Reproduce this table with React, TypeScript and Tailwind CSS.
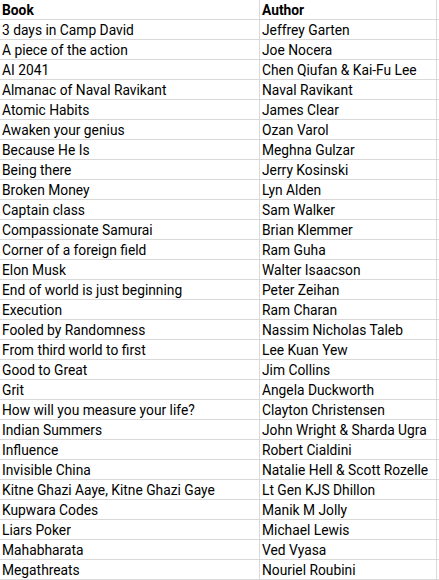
const rows: [string, string][] = [
  ["3 days in Camp David", "Jeffrey Garten"],
  ["A piece of the action", "Joe Nocera"],
  ["AI 2041", "Chen Qiufan & Kai-Fu Lee"],
  ["Almanac of Naval Ravikant", "Naval Ravikant"],
  ["Atomic Habits", "James Clear"],
  ["Awaken your genius", "Ozan Varol"],
  ["Because He Is", "Meghna Gulzar"],
  ["Being there", "Jerry Kosinski"],
  ["Broken Money", "Lyn Alden"],
  ["Captain class", "Sam Walker"],
  ["Compassionate Samurai", "Brian Klemmer"],
  ["Corner of a foreign field", "Ram Guha"],
  ["Elon Musk", "Walter Isaacson"],
  ["End of world is just beginning", "Peter Zeihan"],
  ["Execution", "Ram Charan"],
  ["Fooled by Randomness", "Nassim Nicholas Taleb"],
  ["From third world to first", "Lee Kuan Yew"],
  ["Good to Great", "Jim Collins"],
  ["Grit", "Angela Duckworth"],
  ["How will you measure your life?", "Clayton Christensen"],
  ["Indian Summers", "John Wright & Sharda Ugra"],
  ["Influence", "Robert Cialdini"],
  ["Invisible China", "Natalie Hell & Scott Rozelle"],
  ["Kitne Ghazi Aaye, Kitne Ghazi Gaye", "Lt Gen KJS Dhillon"],
  ["Kupwara Codes", "Manik M Jolly"],
  ["Liars Poker", "Michael Lewis"],
  ["Mahabharata", "Ved Vyasa"],
  ["Megathreats", "Nouriel Roubini"],
];

const Row = ({ book, author, head }: { book: string; author: string; head?: boolean }) => (
  <div className={`flex h-[20px] border-b border-[#d9d9d9] w-[439px] ${head ? "font-bold" : ""}`}>
    <div className="w-[260px] border-r border-[#d9d9d9] pl-[2px] leading-[20px] whitespace-nowrap overflow-hidden">
      {book}
    </div>
    <div className="w-[177px] border-r border-[#d9d9d9] pl-[2px] leading-[20px] whitespace-nowrap overflow-hidden">
      {author}
    </div>
  </div>
);

export default function App() {
  return (
    <div className="w-[439px] h-[580px] bg-white text-black text-[13.8px] font-['Roboto',sans-serif] overflow-hidden">
      <Row book="Book" author="Author" head />
      {rows.map(([b, a]) => (
        <Row key={b} book={b} author={a} />
      ))}
    </div>
  );
}
